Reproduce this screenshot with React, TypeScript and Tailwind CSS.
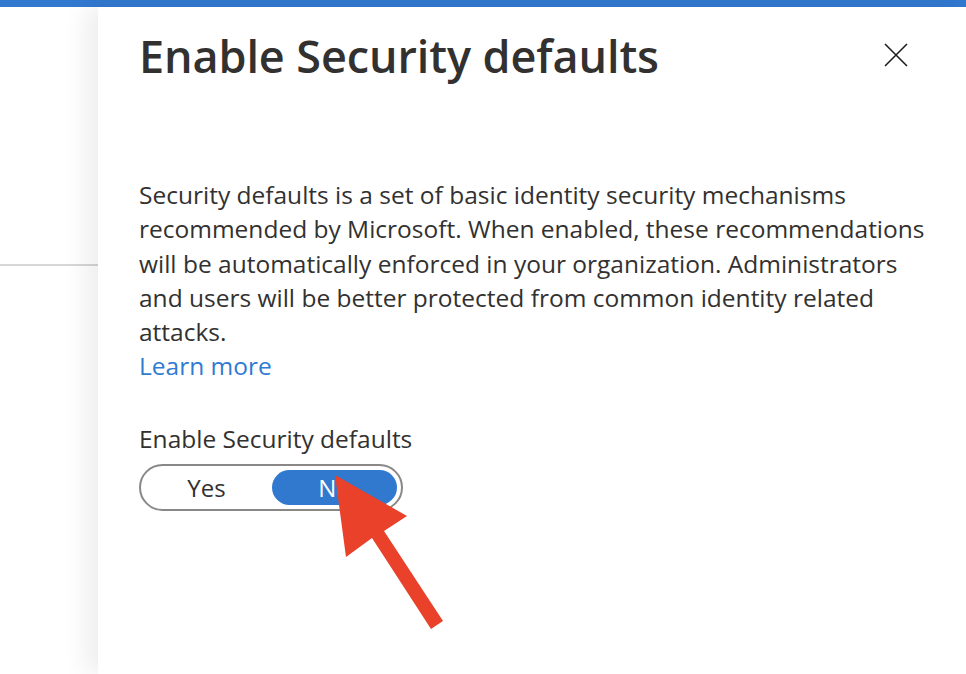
import React from "react";

export default function App() {
  return (
    <div className="w-[966px] h-[674px] overflow-hidden bg-white flex flex-col" style={{ fontFamily: '"Open Sans", "Noto Sans", sans-serif' }}>
      <div className="h-[7px] bg-[#3178cf] shrink-0" />
      <div className="flex flex-1 relative">
        <div className="w-[98px] shrink-0 relative">
          <div className="mt-[257px] h-[2px] bg-[#d6d6d6]" />
        </div>
        <div className="flex-1 relative bg-white shadow-[-12px_0_24px_rgba(0,0,0,0.07)] pl-[41px] pr-[30px]">
          <div className="flex items-start justify-between">
            <h1 className="mt-[21px] text-[45px] leading-[56px] font-semibold text-[#323130] tracking-[-0.1px]">
              Enable Security defaults
            </h1>
            <button className="mt-[35px] mr-[27px] w-[26px] h-[26px] flex items-center justify-center text-[#201f1e]">
              <svg width="24" height="24" viewBox="0 0 24 24" fill="none" stroke="currentColor" strokeWidth="1.6">
                <path d="M1 1 L23 23 M23 1 L1 23" />
              </svg>
            </button>
          </div>
          <p className="mt-[94px] text-[24.5px] leading-[34.3px] text-[#323130] w-[795px]">
            Security defaults is a set of basic identity security mechanisms recommended by Microsoft. When enabled, these recommendations will be automatically enforced in your organization. Administrators and users will be better protected from common identity related attacks.
          </p>
          <a className="block text-[24.5px] leading-[34px] text-[#2f7bd1]">Learn more</a>
          <div className="mt-[39px] text-[24.5px] leading-[34px] text-[#323130]">Enable Security defaults</div>
          <div className="mt-[8px] w-[264px] h-[47px] rounded-full border-2 border-[#8a8886] flex items-center p-[4px]">
            <div className="flex-1 h-full flex items-center justify-center pr-[4px] text-[24px] text-[#323130]">Yes</div>
            <div className="w-[125px] h-full rounded-full bg-[#3178cf] flex items-center justify-center text-[24px] text-white">No</div>
          </div>
        </div>
      </div>
      <svg className="absolute left-0 top-0 pointer-events-none" width="966" height="674" viewBox="0 0 966 674">
        <polygon fill="#e9412a" points="335,475 407,516 384,531 443,621 431,629 372,538 346,557" />
      </svg>
    </div>
  );
}
